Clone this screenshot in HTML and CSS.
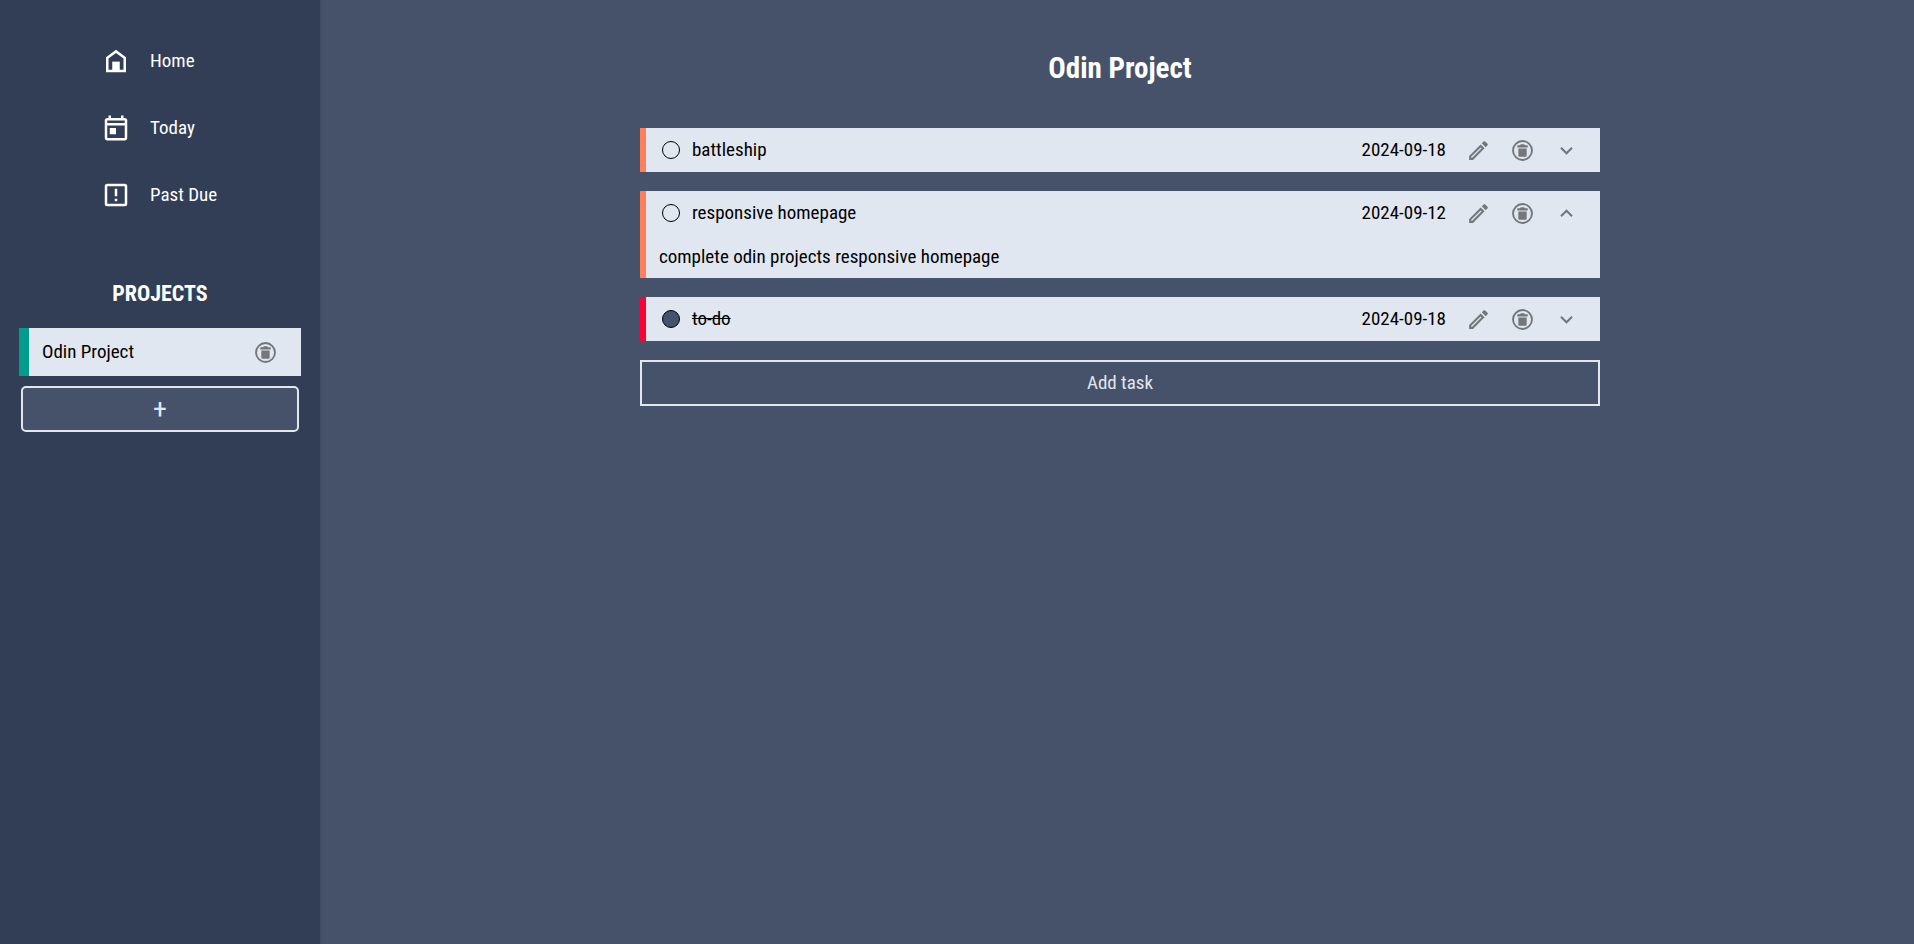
FILE: index.html
```html
<!DOCTYPE html>
<html lang="en">
<head>
<meta charset="utf-8">
<title>Odin Project</title>
<link rel="stylesheet" href="styles.css">
</head>
<body>
<svg class="sprite" aria-hidden="true">
  <symbol id="home" viewBox="0 0 24 24"><path fill-rule="evenodd" d="M4 21V9l8-6 8 6v12H4Zm2-2h12v-9l-6-4.5L6 10v9Z"/><path d="M9 12.5h6V20H9z"/></symbol>
  <symbol id="today" viewBox="0 0 24 24"><path fill-rule="evenodd" d="M5 22q-.825 0-1.413-.588T3 20V6q0-.825.588-1.413T5 4h1V2h2v2h8V2h2v2h1q.825 0 1.413.588T21 6v14q0 .825-.588 1.413T19 22H5Zm0-2h14V10H5v10ZM5 8h14V6H5v2Z"/><path d="M7 12h5v5H7z"/></symbol>
  <symbol id="due" viewBox="0 0 24 24"><path fill-rule="evenodd" d="M5 3h14a2 2 0 0 1 2 2v14a2 2 0 0 1-2 2H5a2 2 0 0 1-2-2V5a2 2 0 0 1 2-2Zm0 2v14h14V5H5Z"/><path d="M11 15h2v2h-2zM11 7h2v6h-2z"/></symbol>
  <symbol id="pencil" viewBox="0 0 24 24"><path fill-rule="evenodd" d="M14.06 9 15 9.94 5.92 19H5v-.92L14.06 9m3.6-6c-.25 0-.51.1-.7.29l-1.83 1.83 3.75 3.75 1.83-1.83c.39-.39.39-1.04 0-1.41l-2.34-2.34c-.2-.2-.45-.29-.71-.29m-3.6 3.19L3 17.25V21h3.75L17.81 9.94l-3.75-3.75Z"/></symbol>
  <symbol id="trash" viewBox="0 0 24 24"><path fill-rule="evenodd" d="M12 2a10 10 0 1 0 0 20 10 10 0 0 0 0-20Zm0 18.2a8.2 8.2 0 1 1 0-16.4 8.2 8.2 0 0 1 0 16.4Z"/><path d="M17 7h-2.5l-1-1h-3l-1 1H7v2h10V7ZM9 18h6a1 1 0 0 0 1-1v-7H8v7a1 1 0 0 0 1 1Z"/></symbol>
  <symbol id="down" viewBox="0 0 24 24"><path d="M7.41 8.58 12 13.17l4.59-4.59L18 10l-6 6-6-6 1.41-1.42Z"/></symbol>
  <symbol id="up" viewBox="0 0 24 24"><path d="M7.41 15.41 12 10.83l4.59 4.58L18 14l-6-6-6 6 1.41 1.41Z"/></symbol>
</svg>
<div class="layout">
  <aside class="sidebar">
    <nav class="nav">
      <a class="nav-link" href="#home"><svg class="nav-icon"><use href="#home"/></svg>Home</a>
      <a class="nav-link" href="#today"><svg class="nav-icon"><use href="#today"/></svg>Today</a>
      <a class="nav-link" href="#due"><svg class="nav-icon"><use href="#due"/></svg>Past Due</a>
    </nav>
    <h2 class="projects-title">PROJECTS</h2>
    <div class="project">
      <a class="project-name" href="#odin">Odin Project</a>
      <button class="icon-button" aria-label="Delete project"><svg class="icon"><use href="#trash"/></svg></button>
    </div>
    <button class="add-project" aria-label="Add project">+</button>
  </aside>
  <main class="main">
    <h1 class="title">Odin Project</h1>
    <div class="tasks">
      <article class="task">
        <div class="task-row">
          <input class="check" type="checkbox" id="t1">
          <label class="task-name" for="t1">battleship</label>
          <time>2024-09-18</time>
          <button class="icon-button" aria-label="Edit"><svg class="icon"><use href="#pencil"/></svg></button>
          <button class="icon-button" aria-label="Delete"><svg class="icon"><use href="#trash"/></svg></button>
          <button class="icon-button" aria-label="Expand"><svg class="icon"><use href="#down"/></svg></button>
        </div>
      </article>
      <article class="task">
        <div class="task-row">
          <input class="check" type="checkbox" id="t2">
          <label class="task-name" for="t2">responsive homepage</label>
          <time>2024-09-12</time>
          <button class="icon-button" aria-label="Edit"><svg class="icon"><use href="#pencil"/></svg></button>
          <button class="icon-button" aria-label="Delete"><svg class="icon"><use href="#trash"/></svg></button>
          <button class="icon-button" aria-label="Collapse"><svg class="icon"><use href="#up"/></svg></button>
        </div>
        <p class="task-details">complete odin projects responsive homepage</p>
      </article>
      <article class="task urgent">
        <div class="task-row">
          <input class="check" type="checkbox" id="t3" checked>
          <label class="task-name" for="t3">to-do</label>
          <time>2024-09-18</time>
          <button class="icon-button" aria-label="Edit"><svg class="icon"><use href="#pencil"/></svg></button>
          <button class="icon-button" aria-label="Delete"><svg class="icon"><use href="#trash"/></svg></button>
          <button class="icon-button" aria-label="Expand"><svg class="icon"><use href="#down"/></svg></button>
        </div>
      </article>
      <button class="add-task">Add task</button>
    </div>
  </main>
</div>
</body>
</html>
```
FILE: styles.css
```css
* { box-sizing: border-box; }

body {
  margin: 0;
  background: #465269;
  color: #000;
  font: 19px/24px "Roboto Condensed", Roboto, sans-serif;
}

button { font: inherit; cursor: pointer; }
a { color: inherit; text-decoration: none; }

.sprite { display: none; }

.layout {
  display: grid;
  grid-template-columns: 320px 1fr;
  min-height: 100vh;
}

.sidebar {
  display: flex;
  flex-direction: column;
  padding: 46px 19px;
  background: #323e56;
  box-shadow: 0 0 2px #323e56;
  color: #fff;
}

.nav {
  display: flex;
  flex-direction: column;
  gap: 37px;
  padding-left: 82px;
}

.nav-link {
  display: flex;
  align-items: center;
  gap: 19px;
}

.nav-icon {
  width: 30px;
  height: 30px;
  fill: currentColor;
}

.projects-title {
  margin: 69px 0 19px;
  font-size: 22px;
  line-height: 30px;
  text-align: center;
}

.project {
  display: flex;
  align-items: center;
  height: 48px;
  padding: 0 23px 0 13px;
  border-left: 10px solid #009d8f;
  background: #e1e7f0;
  color: #000;
}

.project-name { flex: 1; }

.add-project {
  height: 46px;
  margin: 10px 2px 0;
  padding: 0;
  border: 2px solid #e1e7f0;
  border-radius: 5px;
  background: #465269;
  color: #e1e7f0;
  font-size: 28px;
}

.icon-button {
  display: flex;
  padding: 0;
  border: 0;
  background: none;
}

.icon {
  width: 25px;
  height: 25px;
  fill: #73777b;
}

.main {
  display: flex;
  flex-direction: column;
  align-items: center;
  padding: 48px 0 48px 6px;
}

.title {
  margin: 0 0 40px;
  color: #fff;
  font-size: 29px;
  line-height: 40px;
}

.tasks {
  display: flex;
  flex-direction: column;
  gap: 19px;
  width: 90%;
  max-width: 960px;
}

.task {
  padding: 0 21px 0 13px;
  border-left: 6px solid #ff7f5c;
  background: #e1e7f0;
}

.urgent { border-left-color: #ff0033; }

.task-row {
  display: flex;
  align-items: center;
  gap: 20px;
  height: 44px;
}

.icon-button + .icon-button { margin-left: -1px; }

.task-name {
  flex: 1;
  margin-left: -8px;
}

.check {
  appearance: none;
  width: 18px;
  height: 18px;
  margin: 0 0 0 3px;
  border: 1px solid #000;
  border-radius: 50%;
}

.check:checked { background: #465269; }
.check:checked + .task-name { text-decoration: line-through; }

.task-details {
  margin: 0;
  padding: 10px 0 9px;
}

.add-task {
  height: 46px;
  border: 2px solid #e1e7f0;
  background: none;
  color: #e1e7f0;
}
```
